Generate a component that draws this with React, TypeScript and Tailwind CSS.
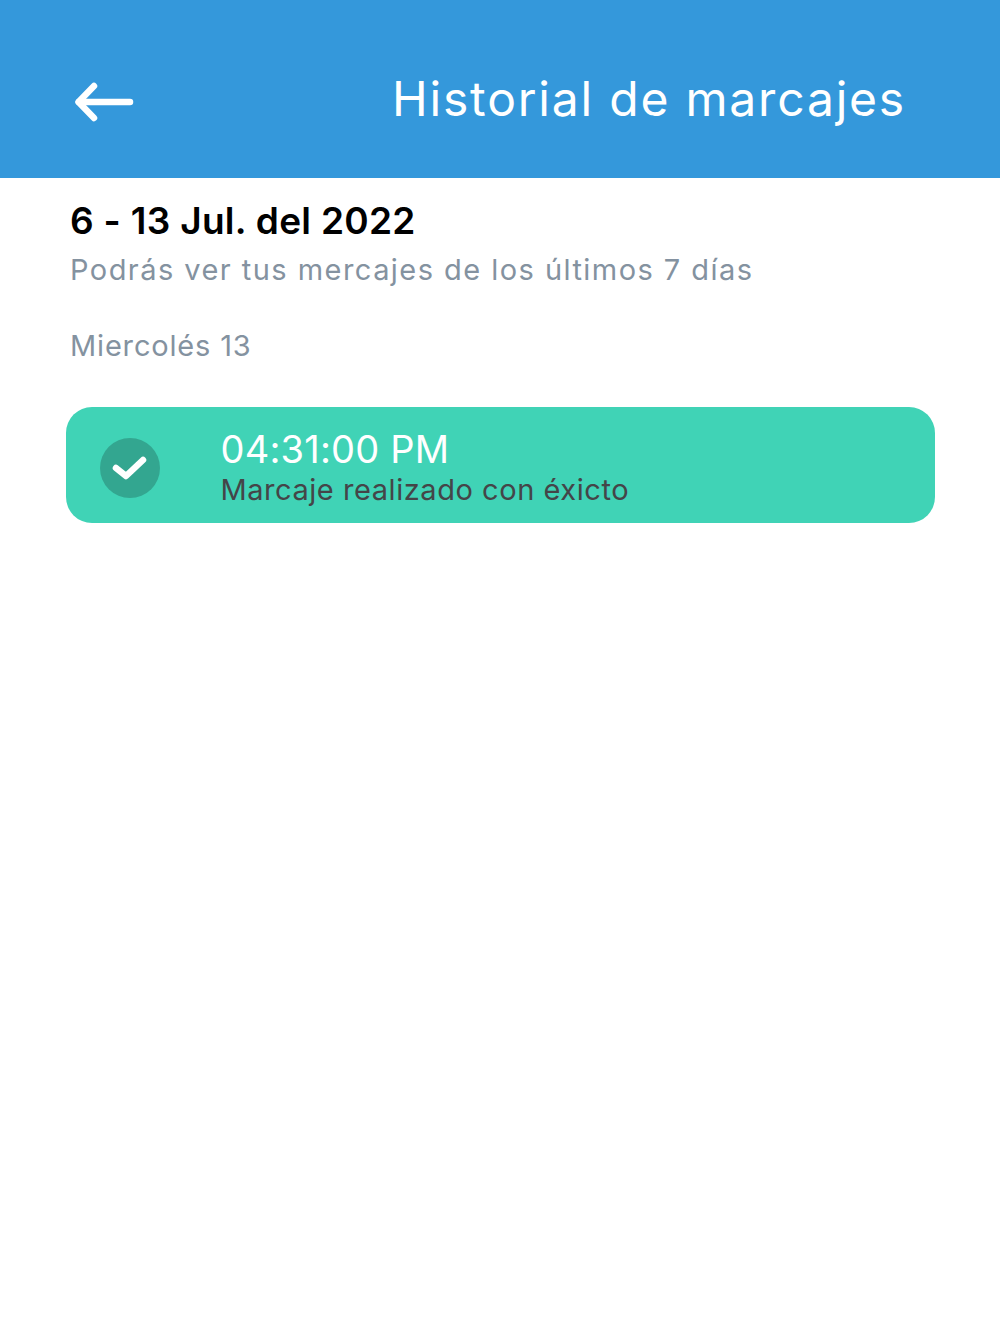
export default function App() {
  return (
    <div className="min-h-[1334px] bg-white font-['Inter','Noto_Sans',sans-serif]">
      <header className="flex h-[178px] items-center justify-between bg-[#3498db] pl-[70px] pr-[94px] pt-[20px] text-white">
        <svg width="65" height="44" viewBox="0 0 65 44" fill="none" stroke="white" strokeWidth="6.5" strokeLinecap="round" strokeLinejoin="round" className="mt-[6px]">
          <path d="M60 22H9" />
          <path d="M24 6 8.5 22l15.500 16" />
        </svg>
        <h1 className="text-[48px] leading-none tracking-[1.8px]">Historial de marcajes</h1>
      </header>
      <main className="px-[65.5px]">
        <div className="pl-[4.5px]">
          <h2 className="mt-[21px] text-[37px] font-semibold leading-[44px] tracking-[0.3px] text-black">6 - 13 Jul. del 2022</h2>
          <p className="mt-[9px] text-[29px] leading-[36px] tracking-[1.45px] text-[#8492a0]">Podrás ver tus mercajes de los últimos 7 días</p>
          <p className="mt-[40px] text-[29px] leading-[36px] tracking-[0.83px] text-[#8492a0]">Miercolés 13</p>
        </div>
        <div className="mt-[42.5px] flex h-[116.5px] items-center rounded-[26px] bg-[#40d3b6] pl-[34px]">
          <span className="mt-[7px] flex h-[60px] w-[60px] items-center justify-center rounded-full bg-[#33a690]">
            <svg width="60" height="60" viewBox="0 0 60 60" fill="none" stroke="white" strokeWidth="6.5" strokeLinecap="round" strokeLinejoin="round">
              <path d="M16 30l10 8 17-16" />
            </svg>
          </span>
          <div className="ml-[61px] mt-[6px]">
            <div className="text-[38px] leading-[42px] tracking-[0.2px] text-white">04:31:00 PM</div>
            <div className="mt-[3px] text-[29px] leading-[34px] tracking-[0.55px] text-[#444548]">Marcaje realizado con éxicto</div>
          </div>
        </div>
      </main>
    </div>
  );
}
